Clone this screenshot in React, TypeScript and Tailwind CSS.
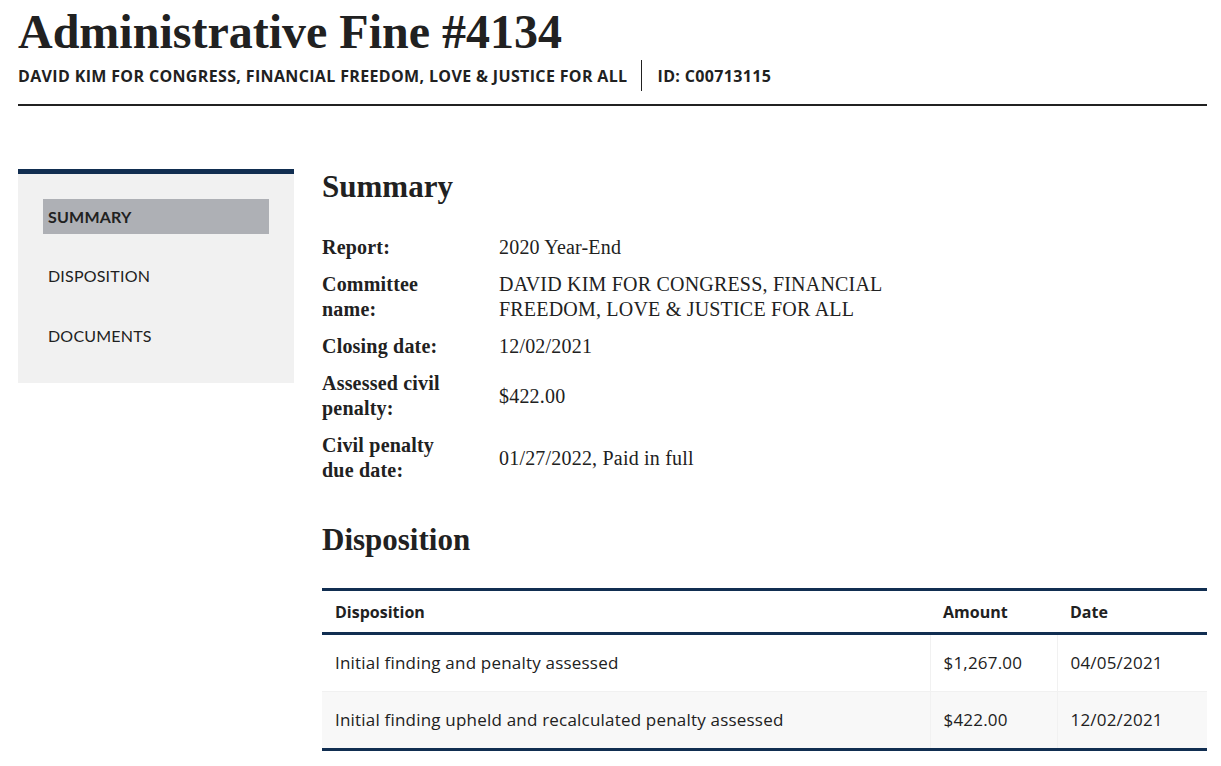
const serif = { fontFamily: '"Liberation Serif", "DejaVu Serif", serif' };

function SideNav() {
  return (
    <nav className="w-[276px] shrink-0 self-start border-t-[5px] border-[#112e51] bg-[#f1f1f1] px-[25px] pt-[25px] pb-[30px]">
      <ul className="font-['Lato',sans-serif] text-[16px] tracking-[0.2px] text-[#212121]">
        <li className="flex h-[35px] items-center bg-[#aeb0b5] pl-[5px] font-bold">SUMMARY</li>
        <li className="mt-[24px] flex h-[35px] items-center pl-[5px]">DISPOSITION</li>
        <li className="mt-[25px] flex h-[35px] items-center pl-[5px]">DOCUMENTS</li>
      </ul>
    </nav>
  );
}

const summary: [string, string][] = [
  ['Report:', '2020 Year-End'],
  ['Committee name:', 'DAVID KIM FOR CONGRESS, FINANCIAL FREEDOM, LOVE & JUSTICE FOR ALL'],
  ['Closing date:', '12/02/2021'],
  ['Assessed civil penalty:', '$422.00'],
  ['Civil penalty due date:', '01/27/2022, Paid in full'],
];

const rows = [
  { text: 'Initial finding and penalty assessed', amount: '$1,267.00', date: '04/05/2021' },
  { text: 'Initial finding upheld and recalculated penalty assessed', amount: '$422.00', date: '12/02/2021' },
];

export default function App() {
  return (
    <div className="min-h-screen bg-white pl-[18px] pr-[14px] pt-[5px] text-[#212121]">
      <header className="border-b-2 border-[#212121] pb-[13px]">
        <h1 className="text-[48px] font-bold leading-[54px]" style={serif}>
          Administrative Fine #4134
        </h1>
        <div className="mt-[1px] flex items-center font-['Open_Sans',sans-serif] text-[16px] font-bold tracking-[0.35px]">
          <span className="pr-[13px]">DAVID KIM FOR CONGRESS, FINANCIAL FREEDOM, LOVE &amp; JUSTICE FOR ALL</span>
          <span className="h-[31px] border-l border-[#212121]" />
          <span className="pl-[16px]">ID: C00713115</span>
        </div>
      </header>

      <div className="mt-[63px] flex gap-[28px]">
        <SideNav />
        <main className="flex-1">
          <h2 className="mt-[1px] text-[31px] font-bold leading-[34px]" style={serif}>Summary</h2>
          <table className="mt-[25px] w-[580px] text-[20px] leading-[25px] tracking-[0.2px]" style={serif}>
            <tbody>
              {summary.map(([label, value]) => (
                <tr key={label}>
                  <th className="w-[177px] py-[6px] pr-[37px] text-left align-top font-bold">{label}</th>
                  <td className="py-[6px] align-middle">{value}</td>
                </tr>
              ))}
            </tbody>
          </table>

          <h2 className="mt-[34px] text-[31px] font-bold leading-[34px]" style={serif}>Disposition</h2>
          <table className="mt-[31px] w-full border-y-[3px] border-[#112e51] font-['Open_Sans',sans-serif] text-[16px]">
            <thead>
              <tr className="border-b-[3px] border-[#112e51]">
                <th className="h-[44px] px-[13px] text-left font-bold">Disposition</th>
                <th className="w-[127px] px-[13px] text-left font-bold">Amount</th>
                <th className="w-[150px] px-[13px] text-left font-bold">Date</th>
              </tr>
            </thead>
            <tbody className="text-[17px] tracking-[0.2px]">
              {rows.map((r, i) => (
                <tr key={r.date} className={i % 2 === 1 ? 'bg-[#f8f8f8]' : 'border-b border-[#f1f1f1]'}>
                  <td className="h-[58px] px-[13px]">{r.text}</td>
                  <td className="border-l border-[#f1f1f1] px-[13px]">{r.amount}</td>
                  <td className="border-l border-[#f1f1f1] px-[13px]">{r.date}</td>
                </tr>
              ))}
            </tbody>
          </table>
        </main>
      </div>
    </div>
  );
}
